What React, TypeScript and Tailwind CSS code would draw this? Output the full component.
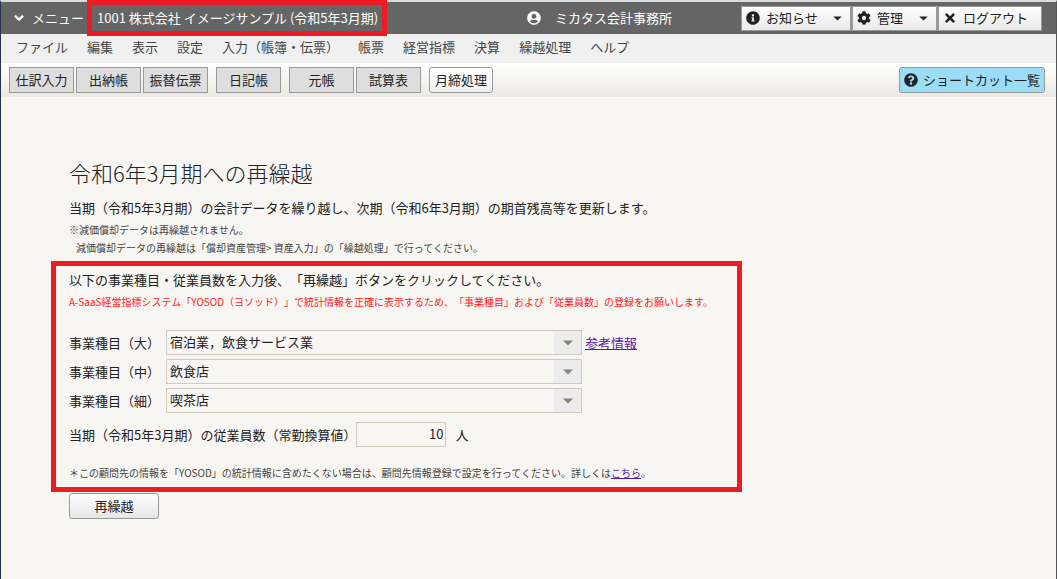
import type { ReactNode } from "react";
import { FaChevronDown, FaCog, FaInfoCircle, FaQuestionCircle, FaTimes, FaUserCircle } from "react-icons/fa";

const MENUS = [
  "ファイル",
  "編集",
  "表示",
  "設定",
  "入力（帳簿・伝票）",
  "帳票",
  "経営指標",
  "決算",
  "繰越処理",
  "ヘルプ",
];

const TOOL_GROUPS = [["仕訳入力", "出納帳", "振替伝票"], ["日記帳"], ["元帳", "試算表"]];

const CATEGORIES = [
  { id: "large", label: "事業種目（大）", value: "宿泊業，飲食サービス業", link: "参考情報" },
  { id: "middle", label: "事業種目（中）", value: "飲食店" },
  { id: "small", label: "事業種目（細）", value: "喫茶店" },
];

function Caret({ className }: { className: string }) {
  return (
    <svg viewBox="0 0 10 6" className={className} aria-hidden="true">
      <path d="M0 0.5h10L5 5.5z" fill="currentColor" />
    </svg>
  );
}

function HeaderButton({
  icon,
  label,
  width,
  caret,
}: {
  icon: ReactNode;
  label: string;
  width: string;
  caret?: boolean;
}) {
  return (
    <button
      type="button"
      className={`flex h-[25px] items-center border border-l-2 border-[#999] bg-linear-to-b from-white to-[#e9e9e9] pl-1 pr-2 text-[#222] first:border-l ${width}`}
    >
      {icon}
      <span className="ml-[6px]">{label}</span>
      {caret && <Caret className="ml-auto h-[5px] w-[9px]" />}
    </button>
  );
}

function Header() {
  return (
    <header className="relative flex h-8 items-center bg-[#656565] pl-[13px] pr-[14px] text-white">
      <button type="button" className="flex w-[83px] items-center gap-2">
        <FaChevronDown className="size-[10px]" stroke="currentColor" strokeWidth={50} />
        メニュー
      </button>
      <span>1001 株式会社 イメージサンプル (令和5年3月期)</span>
      <div className="absolute -top-[2px] left-[86px] h-9 w-[300px] border-5 border-[#ed1c24]" />
      <div className="ml-auto mr-[69px] flex items-center gap-[14px]">
        <FaUserCircle className="size-[14px]" />
        ミカタス会計事務所
      </div>
      <div className="flex">
        <HeaderButton icon={<FaInfoCircle className="size-[14px]" />} label="お知らせ" width="w-[110px]" caret />
        <HeaderButton icon={<FaCog className="size-[14px]" />} label="管理" width="w-[86px]" caret />
        <HeaderButton icon={<FaTimes className="size-[14px]" />} label="ログアウト" width="w-[105px]" />
      </div>
    </header>
  );
}

function Toolbar() {
  return (
    <div className="flex h-[34px] items-center gap-2 bg-linear-to-b from-white to-[#ece9e3] pl-2 pr-[11px]">
      {TOOL_GROUPS.map((group) => (
        <div key={group[0]} className="flex gap-[2px]">
          {group.map((name) => (
            <button
              key={name}
              type="button"
              className="h-[26px] w-[65px] border border-[#999] bg-[#dedede] text-center"
            >
              {name}
            </button>
          ))}
        </div>
      ))}
      <button
        type="button"
        className="h-[26px] w-16 rounded-[3px] border border-[#999] bg-linear-to-b from-white to-[#f0f0f0]"
      >
        月締処理
      </button>
      <button
        type="button"
        className="ml-auto flex h-[26px] items-center gap-[5px] rounded-[3px] border border-[#999] bg-[#9bdcf6] px-1"
      >
        <FaQuestionCircle className="size-[14px]" />
        ショートカット一覧
      </button>
    </div>
  );
}

function CategoryRow({ id, label, value, link }: { id: string; label: string; value: string; link?: string }) {
  return (
    <div className="flex items-center">
      <label htmlFor={id} className="w-[97px]">
        {label}
      </label>
      <div className="relative w-[416px]">
        <select
          id={id}
          defaultValue={value}
          className="block h-[25px] w-full appearance-none border border-[#d0cabb] bg-transparent pb-[2px] pl-[3px] pr-8"
        >
          <option>{value}</option>
        </select>
        <div className="pointer-events-none absolute inset-y-px right-px flex w-[27px] items-center justify-center bg-[#ececec] text-[#8a8375]">
          <Caret className="h-[6px] w-[10px]" />
        </div>
      </div>
      {link && (
        <a href="#reference" className="ml-[3px] text-[#551aab] underline">
          {link}
        </a>
      )}
    </div>
  );
}

function CarryOverForm() {
  return (
    <form className="pl-[50px]">
      <div className="px-[18px]">
        <h1 className="text-[22px] leading-8 font-light">令和6年3月期への再繰越</h1>
        <p className="mt-[10px] leading-5">
          当期（令和5年3月期）の会計データを繰り越し、次期（令和6年3月期）の期首残高等を更新します。
        </p>
        <p className="mt-[3px] text-[10px] leading-[18px] text-[#444]">
          ※減価償却データは再繰越されません。
          <br />
          <span className="pl-[7px]">
            減価償却データの再繰越は「償却資産管理&gt; 資産入力」の「繰越処理」で行ってください。
          </span>
        </p>
      </div>

      <section className="mt-1 w-[691px] border-5 border-[#ed1c24] px-[13px] pt-1 pb-[5px]">
        <p className="leading-5">以下の事業種目・従業員数を入力後、「再繰越」ボタンをクリックしてください。</p>
        <p className="mt-[3px] text-[10px] leading-[18px] text-[#ff1a1a]">
          A-SaaS経営指標システム「YOSOD（ヨソッド）」で統計情報を正確に表示するため、「事業種目」および「従業員数」の登録をお願いします。
        </p>
        <div className="mt-[19px] flex flex-col gap-1">
          {CATEGORIES.map((category) => (
            <CategoryRow key={category.id} {...category} />
          ))}
        </div>
        <div className="mt-[9px] flex items-center">
          <label htmlFor="employees">当期（令和5年3月期）の従業員数（常勤換算値）</label>
          <input
            id="employees"
            type="text"
            defaultValue="10"
            className="h-[25px] w-[90px] border border-[#d0cabb] bg-transparent px-[2px] pb-[2px] text-right"
          />
          <span className="ml-[9px]">人</span>
        </div>
        <p className="mt-[17px] text-[10px] leading-[18px] text-[#444]">
          ＊この顧問先の情報を「YOSOD」の統計情報に含めたくない場合は、顧問先情報登録で設定を行ってください。詳しくは
          <a href="#details" className="text-[#551aab] underline">
            こちら
          </a>
          。
        </p>
      </section>

      <button
        type="button"
        className="mt-px ml-[18px] block h-[26px] w-[90px] rounded-[3px] border border-[#999] bg-linear-to-b from-white to-[#e6e6e6]"
      >
        再繰越
      </button>
    </form>
  );
}

export default function App() {
  return (
    <div className="min-h-screen border-x border-t-2 border-t-[#d9dcdc] border-l-[#2a3050] border-r-[#555] bg-[#f8f6f2] font-['Noto_Sans_CJK_JP',sans-serif] text-[13px] leading-5 whitespace-nowrap text-[#222] [text-spacing-trim:space-all]">
      <Header />
      <nav className="flex h-[29px] items-center gap-[19px] bg-[#f0f0f0] pl-[15px] pb-[3px] text-[#444]">
        {MENUS.map((menu) => (
          <button key={menu} type="button">
            {menu}
          </button>
        ))}
      </nav>
      <Toolbar />
      <main className="pt-[59px]">
        <CarryOverForm />
      </main>
    </div>
  );
}
